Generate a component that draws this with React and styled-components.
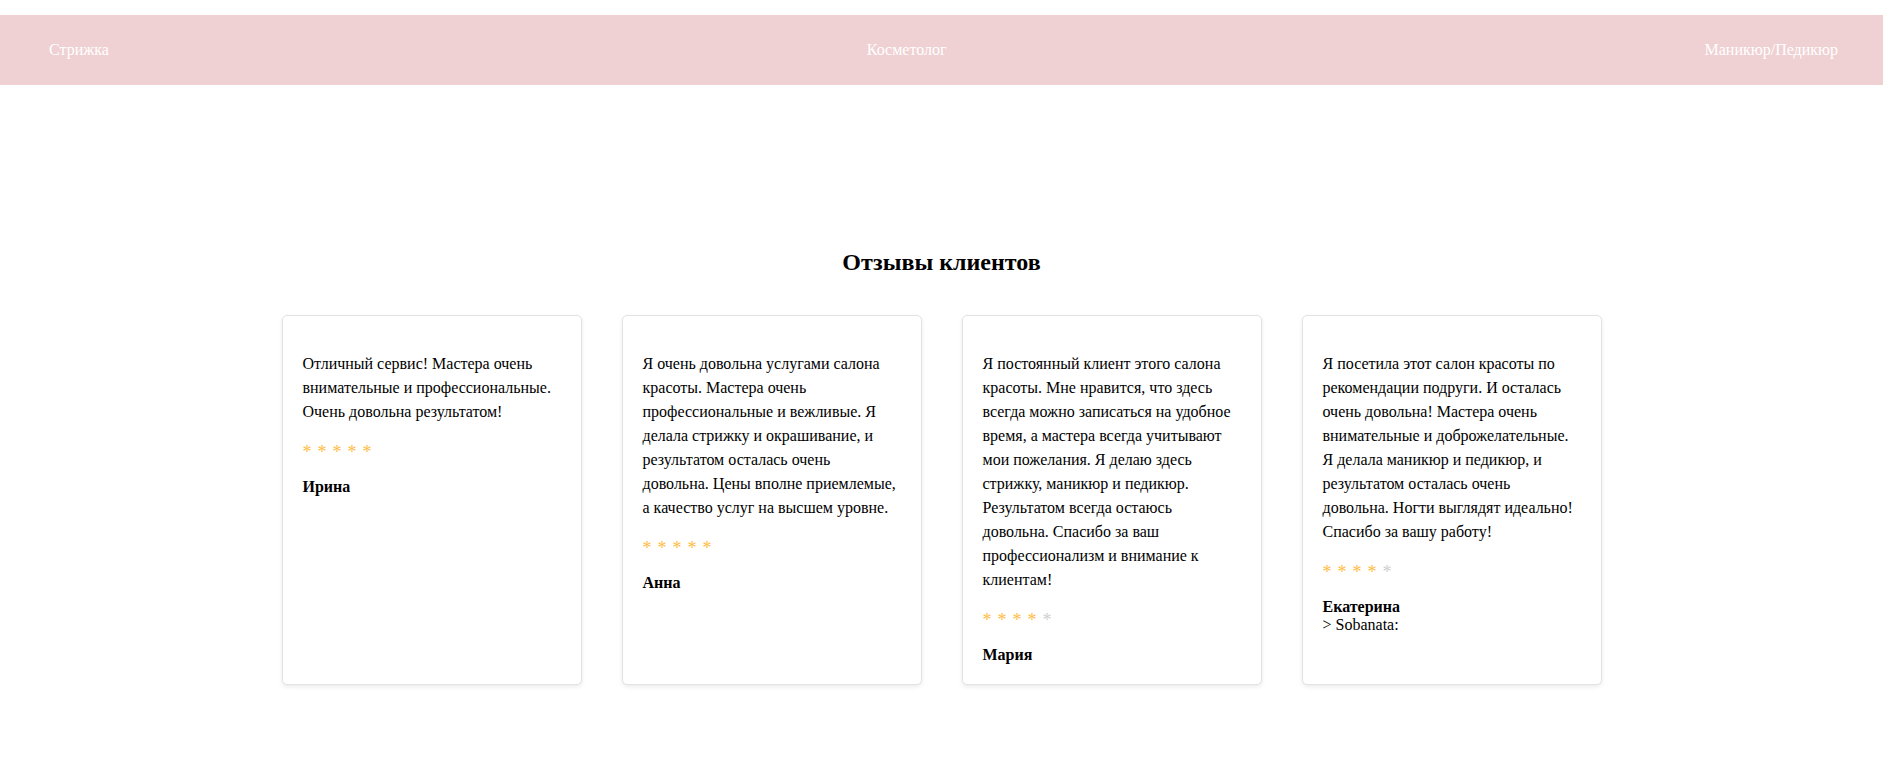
import styled, { createGlobalStyle } from "styled-components";

const GlobalStyle = createGlobalStyle`
    body {
        margin: 0;
        font-family: "Liberation Serif", "Times New Roman", serif;
        background: #fff;
        color: #000;
    }
`

const Page = styled.div`
    margin-right: 7px;
`

const Nav = styled.nav`
    display: flex;
    justify-content: space-between;
    align-items: center;
    height: 70px;
    margin-top: 15px;
    padding: 0 45px 0 49px;
    background-color: #efd1d3;
    a {
        color: #fff;
        font-size: 16px;
        text-decoration: none;
    }
`

const Reviews = styled.section`
    padding-top: 164px;
    padding-bottom: 40px;
    & > h2 {
        margin: 0 0 39px;
        text-align: center;
        font-size: 24px;
        font-weight: bold;
    }
`

const CardGrid = styled.div`
    display: grid;
    grid-template-columns: repeat(4, 300px);
    justify-content: center;
    gap: 40px;
`

const Card = styled.article`
    box-sizing: border-box;
    padding: 20px;
    border: 1px solid #e2e2e2;
    border-radius: 5px;
    background: #fff;
    box-shadow: 0 2px 4px rgba(0, 0, 0, 0.08);
    p {
        margin: 16px 0;
        font-size: 16px;
        line-height: 1.5;
    }
`

const Stars = styled.div`
    display: flex;
    gap: 6px;
    height: 18px;
    align-items: center;
`

const Star = styled.span`
    font-size: 18px;
    line-height: 1;
    padding-top: 5px;
    color: ${({ $on }) => ($on ? "#ffbc45" : "#cfcfcf")};
`

const Name = styled.h4`
    margin: 20px 0 0;
    font-size: 16px;
    font-weight: bold;
`

const Extra = styled.div`
    font-size: 16px;
`

const reviews = [
    {
        text: "Отличный сервис! Мастера очень внимательные и профессиональные. Очень довольна результатом!",
        rating: 5,
        name: "Ирина",
    },
    {
        text: "Я очень довольна услугами салона красоты. Мастера очень профессиональные и вежливые. Я делала стрижку и окрашивание, и результатом осталась очень довольна. Цены вполне приемлемые, а качество услуг на высшем уровне.",
        rating: 5,
        name: "Анна",
    },
    {
        text: "Я постоянный клиент этого салона красоты. Мне нравится, что здесь всегда можно записаться на удобное время, а мастера всегда учитывают мои пожелания. Я делаю здесь стрижку, маникюр и педикюр. Результатом всегда остаюсь довольна. Спасибо за ваш профессионализм и внимание к клиентам!",
        rating: 4,
        name: "Мария",
    },
    {
        text: "Я посетила этот салон красоты по рекомендации подруги. И осталась очень довольна! Мастера очень внимательные и доброжелательные. Я делала маникюр и педикюр, и результатом осталась очень довольна. Ногти выглядят идеально! Спасибо за вашу работу!",
        rating: 4,
        name: "Екатерина",
        extra: "> Sobanata:",
    },
]

const App = () => {
    return (
        <Page>
            <GlobalStyle />
            <Nav>
                <a href="#">Стрижка</a>
                <a href="#">Косметолог</a>
                <a href="#">Маникюр/Педикюр</a>
            </Nav>
            <Reviews>
                <h2>Отзывы клиентов</h2>
                <CardGrid>
                    {reviews.map((r) => (
                        <Card key={r.name}>
                            <p>{r.text}</p>
                            <Stars>
                                {[1, 2, 3, 4, 5].map((i) => (
                                    <Star key={i} $on={i <= r.rating}>*</Star>
                                ))}
                            </Stars>
                            <Name>{r.name}</Name>
                            {r.extra && <Extra>{r.extra}</Extra>}
                        </Card>
                    ))}
                </CardGrid>
            </Reviews>
        </Page>
    )
}

export default App
